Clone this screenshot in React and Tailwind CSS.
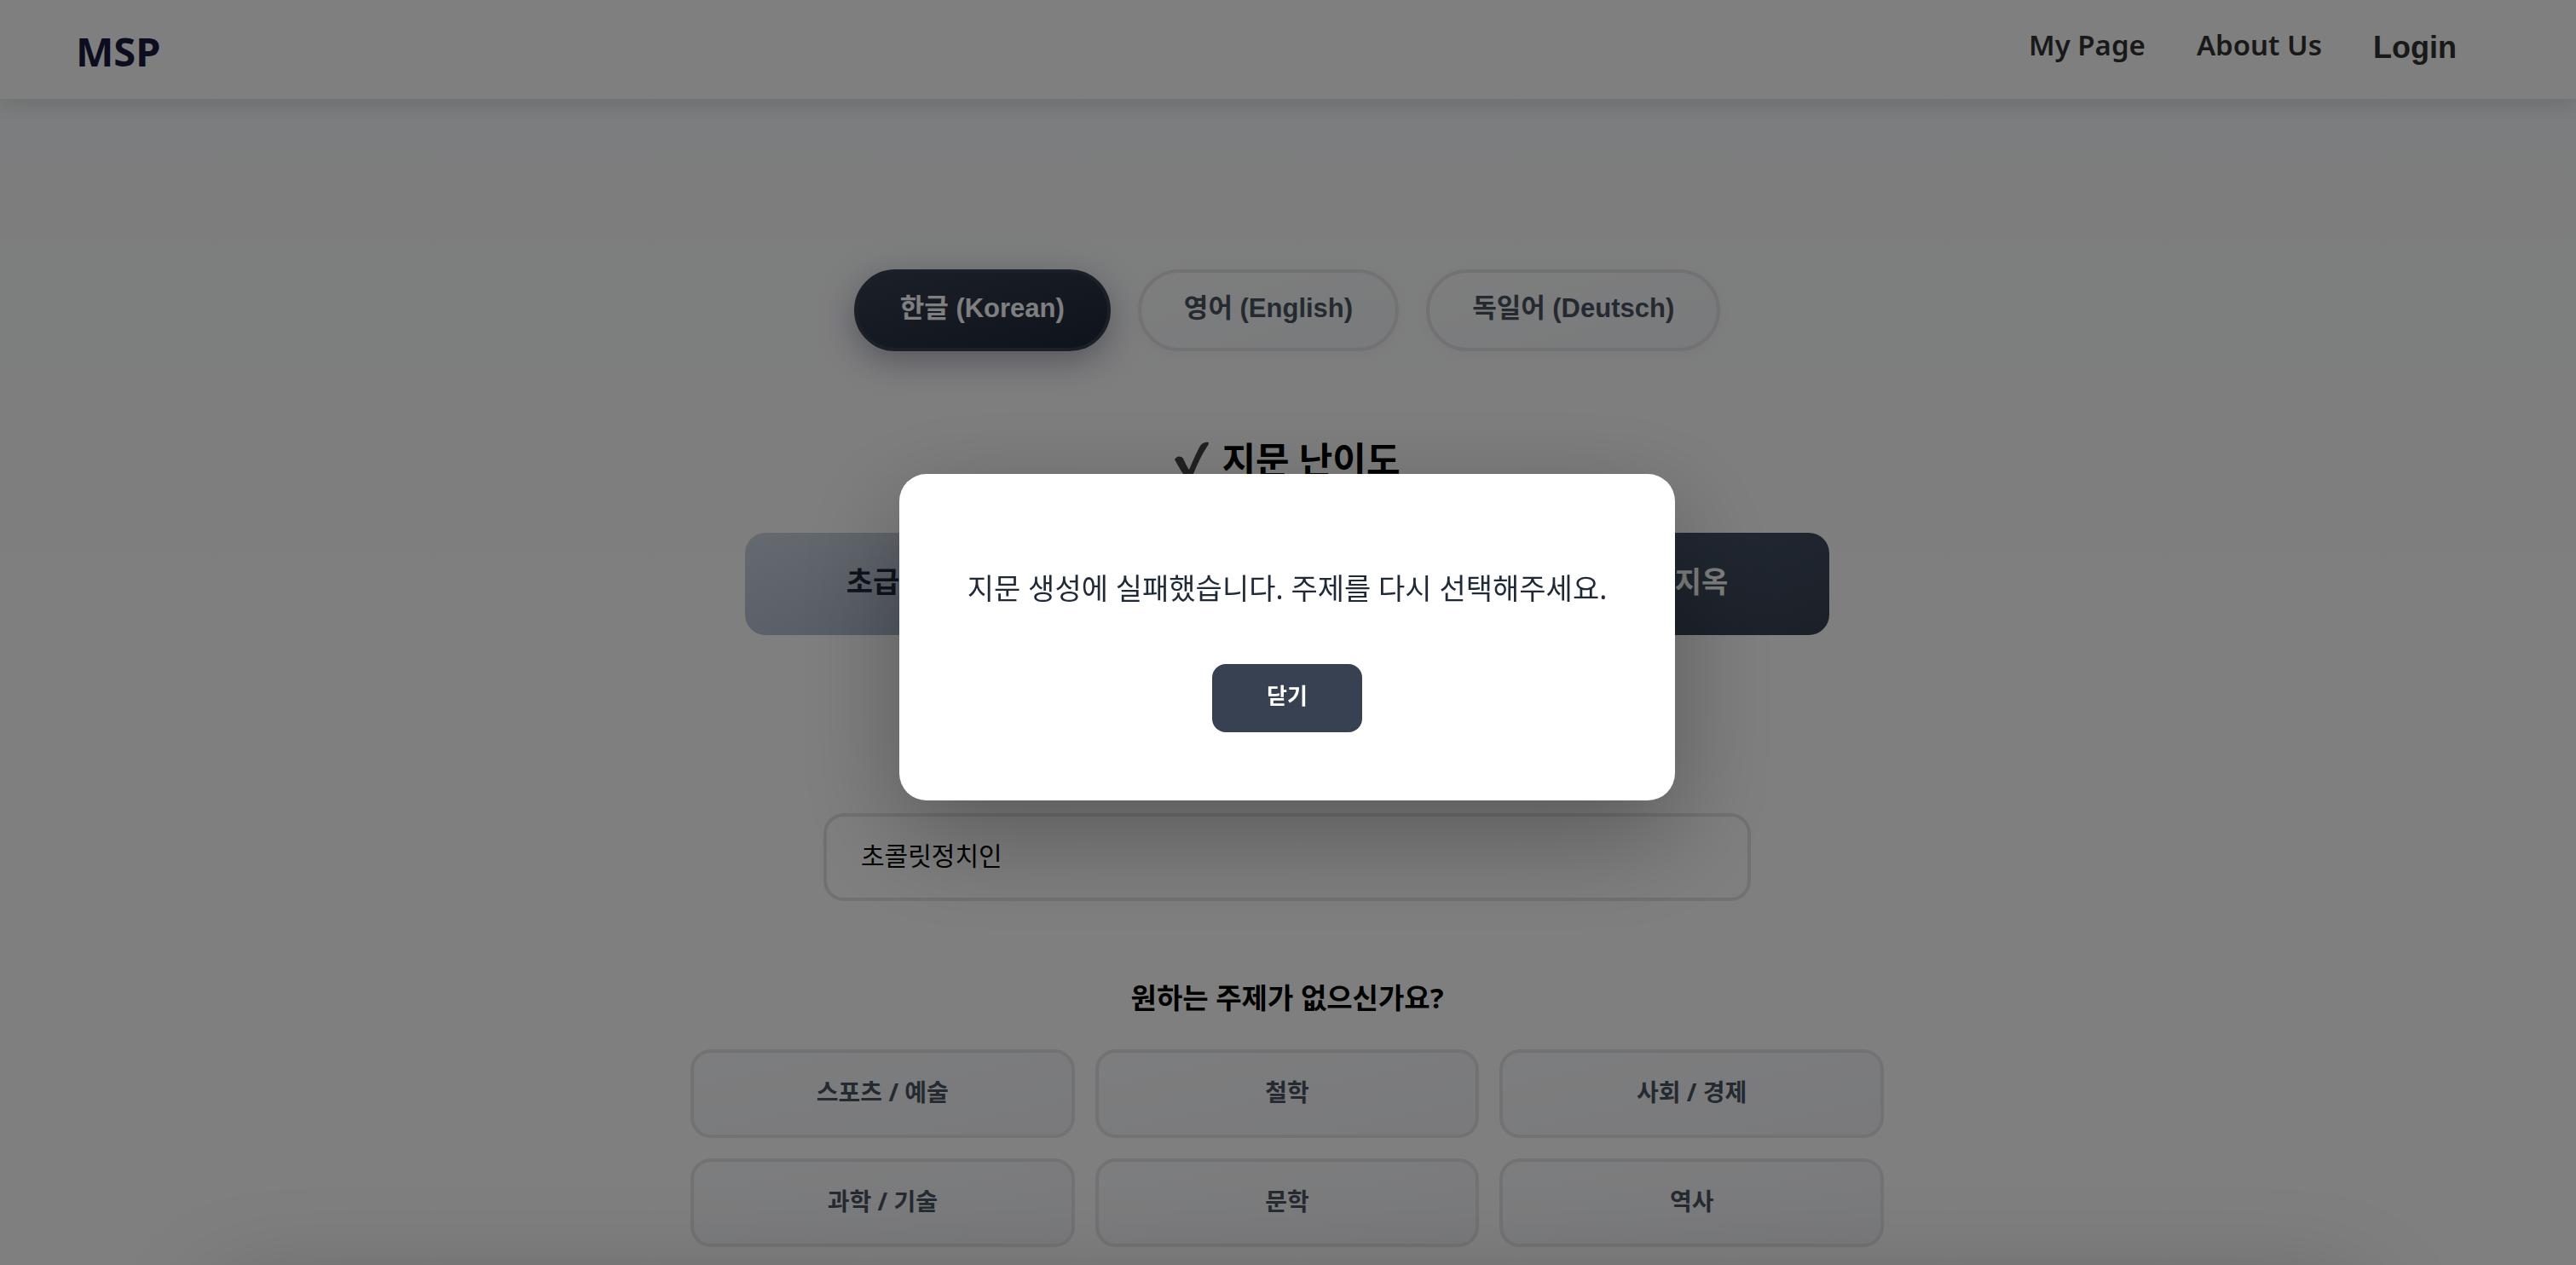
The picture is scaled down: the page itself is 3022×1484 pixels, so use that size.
const languages = [
  { label: '한글 (Korean)', active: true },
  { label: '영어 (English)', active: false },
  { label: '독일어 (Deutsch)', active: false },
];

const levels = [
  { name: '초급', text: '초급', tone: 'from-[#ccd5e0] to-[#a3b0c4] text-[#1e293b]' },
  { name: '중급', text: '', tone: 'from-[#94a3b8] to-[#7c8ba1] text-white' },
  { name: '고급', text: '', tone: 'from-[#64748b] to-[#475569] text-white' },
  { name: '지옥', text: '지옥', tone: 'from-[#475569] to-[#374151] text-white' },
];

const topics = ['스포츠 / 예술', '철학', '사회 / 경제', '과학 / 기술', '문학', '역사'];

function Header() {
  return (
    <header className="relative z-10 flex h-[116px] shrink-0 justify-between bg-white pl-[89px] pr-[140px] shadow-[0_8px_24px_rgba(0,0,0,0.12)]">
      <a href="#home" className="pt-[30px] text-[47px] leading-[60px] font-bold text-[#1a1a40]">MSP</a>
      <nav className="flex gap-[60px] pt-7 text-[33px] leading-[50px] font-semibold text-[#333]">
        <a href="#mypage">My Page</a>
        <a href="#about">About Us</a>
        <button type="button" className="self-start font-['Liberation_Sans',sans-serif] text-[36px] font-bold leading-[56px]">Login</button>
      </nav>
    </header>
  );
}

function LanguagePicker() {
  return (
    <div className="mt-[200px] flex justify-center gap-8">
      {languages.map((l) => (
        <button
          key={l.label}
          type="button"
          aria-pressed={l.active}
          className={
            "h-24 rounded-full border-4 px-[50px] pb-1 font-['Liberation_Sans','Noto_Sans_CJK_KR',sans-serif] text-[31px] font-bold " +
            (l.active
              ? 'border-[#374151] bg-gradient-to-br from-[#374151] to-[#1e2638] text-white shadow-[0_12px_40px_rgba(30,30,60,0.35)]'
              : 'border-[#e4e5ea] bg-gradient-to-br from-[#fbfcfd] to-[#f3f5f7] text-[#4b5563] shadow-[0_4px_16px_rgba(0,0,0,0.04)]')
          }
        >
          {l.label}
        </button>
      ))}
    </div>
  );
}

function Dialog() {
  return (
    <div className="fixed inset-0 z-20 flex items-center justify-center bg-black/50 pt-2.5 pr-0.5">
      <div
        role="dialog"
        aria-modal="true"
        aria-labelledby="dialog-message"
        className="flex flex-col items-center rounded-[32px] bg-white px-20 pt-[106px] pb-20 shadow-[0_40px_120px_rgba(0,0,0,0.3)]"
      >
        <p id="dialog-message" className="text-[34px] leading-[56px] text-[#1f2937]">
          지문 생성에 실패했습니다. 주제를 다시 선택해주세요.
        </p>
        <button type="button" className="mt-[61px] h-20 rounded-2xl bg-[#374151] px-16 pb-1 text-[26px] font-bold text-white">
          닫기
        </button>
      </div>
    </div>
  );
}

export default function App() {
  return (
    <div className="flex h-screen flex-col overflow-hidden bg-gradient-to-b from-[#f8fafc] to-[#fefefe] to-50% font-['Noto_Sans','Noto_Sans_CJK_KR',sans-serif]">
      <Header />
      <main className="flex shrink-0 flex-col items-center pr-0.5">
        <LanguagePicker />
        <h2 className="mt-24 flex items-center gap-4 text-[43px] leading-[64px] font-bold text-black">
          <svg viewBox="0 0 40 44" className="h-11 w-10" fill="#444" aria-hidden="true">
            <path d="M0 21Q3 16 8 18Q10 19 11 22Q14 29 17 33Q25 14 30 5Q34 0 40 1Q40 4 38 6Q30 18 22 38Q18 44 13 42Q8 36 0 21Z" />
          </svg>
          지문 난이도
        </h2>
        <div className="mt-[53px] grid w-[1272px] grid-cols-4 gap-6">
          {levels.map((l) => (
            <button key={l.name} type="button" aria-label={l.name} className={'h-[120px] rounded-3xl bg-gradient-to-br pb-1.5 text-[34px] font-bold ' + l.tone}>
              {l.text}
            </button>
          ))}
        </div>
        <input
          type="text"
          aria-label="주제"
          defaultValue="초콜릿정치인"
          className="mt-[209px] h-[103px] w-[1088px] rounded-3xl border-4 border-[#e1e3ea] bg-white px-10 pb-2 text-[30px] text-black"
        />
        <h3 className="mt-[90px] text-[33px] leading-[48px] font-bold text-black">원하는 주제가 없으신가요?</h3>
        <div className="mt-[36px] grid w-[1400px] grid-cols-3 gap-6">
          {topics.map((t) => (
            <button key={t} type="button" className="h-[104px] rounded-3xl border-4 border-[#e4e5ea] bg-gradient-to-br from-[#fafbfd] to-[#f3f4f7] pb-1 text-[28px] font-bold text-[#4b5563]">
              {t}
            </button>
          ))}
        </div>
      </main>
      <section aria-label="지문" className="mx-auto mt-14 h-40 w-[2520px] shrink-0 rounded-[48px] bg-white shadow-[0_0_120px_rgba(0,0,0,0.25)]" />
      <Dialog />
    </div>
  );
}
